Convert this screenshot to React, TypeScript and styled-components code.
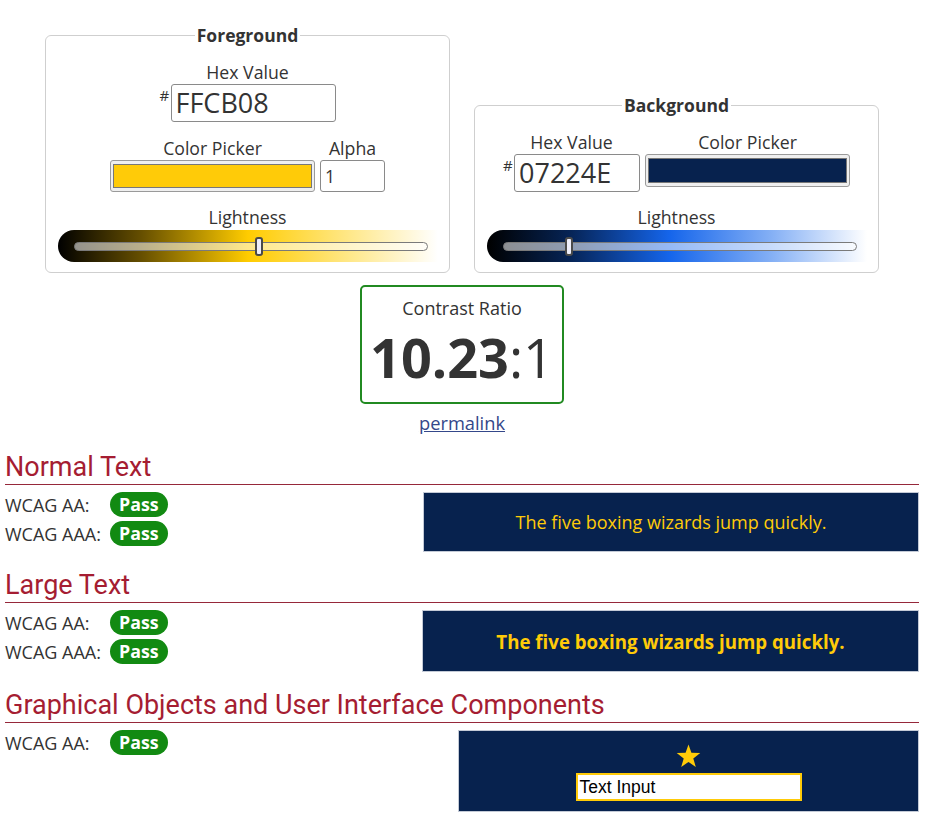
import React from "react";
import styled, { createGlobalStyle } from "styled-components";

const GlobalStyle = createGlobalStyle`
  html, body { margin: 0; padding: 0; background: #fff; }
  body {
    font-family: "Open Sans", "Liberation Sans", sans-serif;
    color: #333;
    font-size: 17.5px;
  }
  * { box-sizing: border-box; }
`;

const Page = styled.div`
  width: 934px;
  padding: 24px 15px 20px 5px;
`;

const Pickers = styled.div`
  display: flex;
  align-items: flex-end;
  gap: 24px;
  padding-left: 40px;
`;

const Panel = styled.fieldset`
  width: 405px;
  margin: 0;
  border: 1px solid #cfcfcf;
  border-radius: 6px;
  padding: 14px 10px 10px;
  display: flex;
  flex-direction: column;
  align-items: center;
`;

const Legend = styled.legend`
  margin: 0 auto;
  padding: 0 2px;
  font-weight: 700;
  font-size: 17.5px;
  line-height: 23px;
  color: #333;
`;

const Row = styled.div<{ $gap?: number; $mt?: number; $align?: string }>`
  display: flex;
  justify-content: center;
  align-items: ${(p) => p.$align || "flex-start"};
  gap: ${(p) => p.$gap ?? 5}px;
  margin-top: ${(p) => p.$mt ?? 0}px;
`;

const Field = styled.div`
  display: flex;
  flex-direction: column;
  align-items: center;
`;

const Label = styled.div`
  font-size: 17.7px;
  line-height: 23px;
  color: #333;
`;

const HexWrap = styled.div`
  display: flex;
  align-items: flex-start;
`;

const Hash = styled.span`
  font-size: 15px;
  line-height: 15px;
  margin-top: 4px;
  width: 11px;
  color: #333;
`;

const HexInput = styled.div<{ $w: number }>`
  width: ${(p) => p.$w}px;
  height: 38px;
  border: 1px solid #8a8a8a;
  border-radius: 3px;
  font-size: 27px;
  line-height: 36px;
  padding: 0 4px;
  color: #333;
  background: #fff;
`;

const AlphaInput = styled.div`
  width: 65px;
  height: 32px;
  border: 1px solid #8a8a8a;
  border-radius: 3px;
  font-size: 17.5px;
  line-height: 30px;
  padding: 0 4px;
  background: #fff;
`;

const Swatch = styled.div<{ $h: number }>`
  width: 205px;
  height: ${(p) => p.$h}px;
  background: #efefef;
  border: 1px solid #9a9a9a;
  border-radius: 3px;
  padding: 3px 2px;
  display: flex;
`;

const SwatchFill = styled.div<{ $c: string }>`
  flex: 1;
  background: ${(p) => p.$c};
  border: 1px solid #777;
`;

const Slider = styled.div<{ $grad: string }>`
  position: relative;
  width: 380px;
  height: 32px;
  margin-top: 1px;
  border-radius: 16px 0 0 16px;
  background: ${(p) => p.$grad};
  padding: 12px 10px 0 16px;
`;

const Track = styled.div`
  position: relative;
  height: 9px;
  border: 1px solid #7a7a7a;
  border-radius: 5px;
  background: rgba(255, 255, 255, 0.55);
`;

const Thumb = styled.div`
  position: absolute;
  top: -6px;
  width: 8px;
  height: 19px;
  margin-left: -4px;
  background: #eeeefa;
  border: 2px solid #4a4a4a;
  border-radius: 3px;
`;

const RatioCenter = styled.div`
  width: 834px;
  margin-left: 40px;
  display: flex;
  flex-direction: column;
  align-items: center;
`;

const RatioBox = styled.div`
  width: 204px;
  height: 119px;
  margin-top: 12px;
  border: 2px solid #218a21;
  border-radius: 5px;
  display: flex;
  flex-direction: column;
  align-items: center;
  padding-top: 8px;
`;

const RatioLabel = styled.div`
  font-size: 18px;
  line-height: 26px;
  color: #333;
`;

const RatioValue = styled.div`
  font-size: 54px;
  line-height: 60px;
  margin-top: 6px;
  color: #333;
  b { font-weight: 700; }
`;

const Permalink = styled.a`
  margin-top: 7px;
  font-size: 18.3px;
  line-height: 23px;
  color: #34478a;
  text-decoration: underline;
`;

const Section = styled.section<{ $mt?: number }>`
  margin-top: ${(p) => p.$mt ?? 18}px;
`;

const Heading = styled.h2`
  margin: 0;
  font-family: Roboto, "Liberation Sans", sans-serif;
  font-weight: 400;
  font-size: 27px;
  line-height: 30px;
  padding-bottom: 2px;
  color: #a51d32;
  border-bottom: 1px solid #96283a;
`;

const Results = styled.div`
  display: flex;
  justify-content: space-between;
  align-items: flex-start;
  margin-top: 7px;
`;

const Criteria = styled.div`
  display: flex;
  flex-direction: column;
  gap: 4px;
`;

const Criterion = styled.div`
  display: flex;
  align-items: center;
  height: 25px;
`;

const CritLabel = styled.span`
  width: 105px;
  font-size: 18px;
  color: #333;
`;

const Badge = styled.span`
  display: inline-block;
  background: #128a12;
  color: #fff;
  font-weight: 700;
  font-size: 17.8px;
  line-height: 25px;
  height: 25px;
  padding: 0 9px;
  border-radius: 13px;
`;

const Sample = styled.div<{ $w: number; $h: number; $bold?: boolean }>`
  width: ${(p) => p.$w}px;
  height: ${(p) => p.$h}px;
  background: #07224e;
  border: 1px solid #c3cad6;
  color: #ffcb08;
  display: flex;
  flex-direction: column;
  align-items: center;
  justify-content: center;
  font-size: ${(p) => (p.$bold ? 18.7 : 18)}px;
  font-weight: ${(p) => (p.$bold ? 700 : 400)};
`;

const GraphicSample = styled(Sample)`
  justify-content: flex-start;
  padding-top: 13px;
`;

const TextInput = styled.div`
  width: 226px;
  height: 28px;
  margin-top: 5px;
  background: #fff;
  border: 2px solid #ffcb08;
  font-family: "Liberation Sans", Arial, sans-serif;
  font-size: 17.5px;
  line-height: 24px;
  padding-left: 2px;
  color: #000;
  font-weight: 400;
`;

const Star = () => (
  <svg width="25" height="24" viewBox="0 0 24 23" aria-hidden="true">
    <polygon
      points="12,0.5 14.8,8.4 23.3,8.6 16.6,13.8 19,22 12,17.2 5,22 7.4,13.8 0.7,8.6 9.2,8.4"
      fill="#ffcb08"
    />
  </svg>
);

const fgGrad =
  "linear-gradient(to right, #000 0%, #664f00 22%, #ffcc00 50%, #ffe680 75%, #fff 100%)";
const bgGrad =
  "linear-gradient(to right, #000 0%, #062456 22%, #1565eb 48%, #85b0f5 75%, #fff 100%)";

const CriteriaList = ({ aaa = true }: { aaa?: boolean }) => (
  <Criteria>
    <Criterion>
      <CritLabel>WCAG AA:</CritLabel>
      <Badge>Pass</Badge>
    </Criterion>
    {aaa && (
      <Criterion>
        <CritLabel>WCAG AAA:</CritLabel>
        <Badge>Pass</Badge>
      </Criterion>
    )}
  </Criteria>
);

export default function App() {
  return (
    <>
      <GlobalStyle />
      <Page>
        <Pickers>
          <Panel>
            <Legend>Foreground</Legend>
            <Field>
              <Label>Hex Value</Label>
              <HexWrap>
                <Hash>#</Hash>
                <HexInput $w={165}>FFCB08</HexInput>
              </HexWrap>
            </Field>
            <Row $mt={15} $align="flex-end">
              <Field>
                <Label>Color Picker</Label>
                <Swatch $h={32}>
                  <SwatchFill $c="#ffcb08" />
                </Swatch>
              </Field>
              <Field>
                <Label>Alpha</Label>
                <AlphaInput>1</AlphaInput>
              </Field>
            </Row>
            <Row $mt={14}>
              <Field>
                <Label>Lightness</Label>
                <Slider $grad={fgGrad}>
                  <Track>
                    <Thumb style={{ left: "52.5%" }} />
                  </Track>
                </Slider>
              </Field>
            </Row>
          </Panel>
          <Panel>
            <Legend>Background</Legend>
            <Row>
              <Field>
                <Label>Hex Value</Label>
                <HexWrap>
                  <Hash>#</Hash>
                  <HexInput $w={126}>07224E</HexInput>
                </HexWrap>
              </Field>
              <Field>
                <Label>Color Picker</Label>
                <Swatch $h={33}>
                  <SwatchFill $c="#07224e" />
                </Swatch>
              </Field>
            </Row>
            <Row $mt={14}>
              <Field>
                <Label>Lightness</Label>
                <Slider $grad={bgGrad}>
                  <Track>
                    <Thumb style={{ left: "18.5%" }} />
                  </Track>
                </Slider>
              </Field>
            </Row>
          </Panel>
        </Pickers>

        <RatioCenter>
          <RatioBox>
            <RatioLabel>Contrast Ratio</RatioLabel>
            <RatioValue>
              <b>10.23</b>:1
            </RatioValue>
          </RatioBox>
          <Permalink href="#">permalink</Permalink>
        </RatioCenter>

        <Section>
          <Heading>Normal Text</Heading>
          <Results>
            <CriteriaList />
            <Sample $w={496} $h={60}>
              The five boxing wizards jump quickly.
            </Sample>
          </Results>
        </Section>

        <Section>
          <Heading>Large Text</Heading>
          <Results>
            <CriteriaList />
            <Sample $w={497} $h={62} $bold>
              The five boxing wizards jump quickly.
            </Sample>
          </Results>
        </Section>

        <Section $mt={18}>
          <Heading>Graphical Objects and User Interface Components</Heading>
          <Results>
            <CriteriaList aaa={false} />
            <GraphicSample $w={461} $h={82}>
              <Star />
              <TextInput>Text Input</TextInput>
            </GraphicSample>
          </Results>
        </Section>
      </Page>
    </>
  );
}
